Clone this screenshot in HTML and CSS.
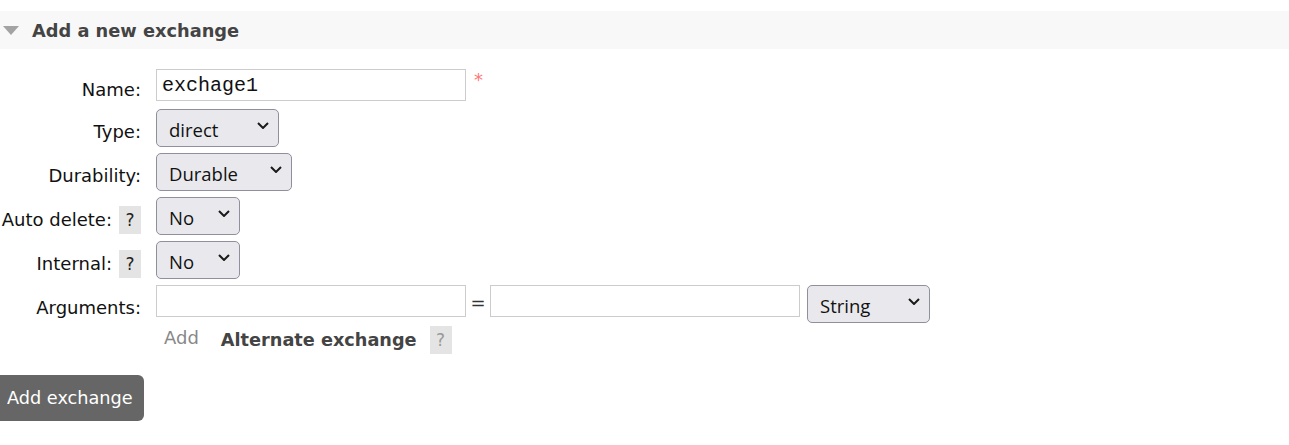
FILE: index.html
```html
<!DOCTYPE html>
<html lang="en">
<head>
<meta charset="utf-8">
<title>Add a new exchange</title>
<link rel="stylesheet" href="styles.css">
</head>
<body>
<div class="section-header">
  <svg class="tri" width="16" height="9" viewBox="0 0 16 9"><polygon points="0,0 16,0 8,9" fill="#a3a3a3"/></svg>
  <h2 class="title">Add a new exchange</h2>
</div>
<form class="form">
  <div class="row row-name">
    <label class="label label-name">Name:</label>
    <div class="control">
      <input class="text" type="text" value="exchage1">
      <span class="mand">*</span>
    </div>
  </div>
  <div class="row">
    <label class="label">Type:</label>
    <div class="control">
      <span class="sel sel-type"><select><option>direct</option><option>fanout</option><option>headers</option><option>topic</option></select><svg class="chev" width="12" height="7" viewBox="0 0 12 7"><polyline points="1,1 6,6 11,1" fill="none" stroke="#1a1a1a" stroke-width="2"/></svg></span>
    </div>
  </div>
  <div class="row">
    <label class="label">Durability:</label>
    <div class="control">
      <span class="sel sel-dur"><select><option>Durable</option><option>Transient</option></select><svg class="chev" width="12" height="7" viewBox="0 0 12 7"><polyline points="1,1 6,6 11,1" fill="none" stroke="#1a1a1a" stroke-width="2"/></svg></span>
    </div>
  </div>
  <div class="row">
    <div class="label"><span class="label-text">Auto delete:</span><span class="help">?</span></div>
    <div class="control">
      <span class="sel sel-no"><select><option>No</option><option>Yes</option></select><svg class="chev" width="12" height="7" viewBox="0 0 12 7"><polyline points="1,1 6,6 11,1" fill="none" stroke="#1a1a1a" stroke-width="2"/></svg></span>
    </div>
  </div>
  <div class="row">
    <div class="label"><span class="label-text">Internal:</span><span class="help">?</span></div>
    <div class="control">
      <span class="sel sel-no"><select><option>No</option><option>Yes</option></select><svg class="chev" width="12" height="7" viewBox="0 0 12 7"><polyline points="1,1 6,6 11,1" fill="none" stroke="#1a1a1a" stroke-width="2"/></svg></span>
    </div>
  </div>
  <div class="row row-args">
    <label class="label">Arguments:</label>
    <div class="control">
      <input class="text" type="text">
      <span class="eq">=</span>
      <input class="text" type="text">
      <span class="sel sel-type sel-string"><select><option>String</option><option>Number</option><option>Boolean</option><option>List</option></select><svg class="chev" width="12" height="7" viewBox="0 0 12 7"><polyline points="1,1 6,6 11,1" fill="none" stroke="#1a1a1a" stroke-width="2"/></svg></span>
    </div>
  </div>
  <div class="row row-add">
    <div class="label"></div>
    <div class="control add-line">
      <span class="add-link">Add</span>
      <span class="alt">Alternate exchange</span>
      <span class="help help-dim">?</span>
    </div>
  </div>
  <button class="btn" type="button">Add exchange</button>
</form>
</body>
</html>
```
FILE: styles.css
```css
html, body {
  margin: 0;
  padding: 0;
  background: #ffffff;
}
body {
  font-family: "DejaVu Sans", Verdana, sans-serif;
  font-size: 18px;
  color: #111;
}
.section-header {
  margin-top: 11px;
  height: 38px;
  background: #f8f8f8;
  display: flex;
  align-items: center;
}
.tri {
  margin-left: 3px;
  margin-top: 1px;
  display: block;
}
.title {
  margin: 0 0 0 13px;
  font-size: 17.8px;
  font-weight: bold;
  color: #444;
  line-height: 21px;
}
.form {
  margin-top: 20px;
  display: flex;
  flex-direction: column;
  align-items: flex-start;
}
.row {
  display: flex;
  align-items: flex-start;
  height: 44px;
}
.row-name { height: 40px; }
.row-args { height: 41px; }
.row-add { height: 28px; }
.label {
  width: 141px;
  flex-shrink: 0;
  display: flex;
  justify-content: flex-end;
  align-items: flex-start;
  text-align: right;
  line-height: 21px;
  padding-top: 12px;
  box-sizing: border-box;
  white-space: nowrap;
}
.label-name { padding-top: 10px; }
.label .help {
  margin-left: 7px;
  margin-top: -3px;
}
.help {
  display: inline-block;
  width: 22px;
  height: 28px;
  line-height: 28px;
  text-align: center;
  background: #e4e4e4;
  font-size: 17px;
  color: #222;
}
.help-dim { color: #999; }
.row-add .label { padding-top: 0; }
.control {
  margin-left: 15px;
  display: flex;
  align-items: flex-start;
}
.text {
  width: 310px;
  height: 32px;
  box-sizing: border-box;
  border: 1px solid #cccccc;
  padding: 0 5px;
  margin: 0;
  font-family: "Liberation Mono", "Courier New", monospace;
  font-size: 20px;
  color: #111;
  background: #fff;
  outline: none;
}
.mand {
  margin-left: 8px;
  margin-top: 2px;
  color: #f77;
  font-size: 18px;
  line-height: 18px;
}
.eq {
  width: 24px;
  text-align: center;
  line-height: 32px;
  margin-top: 2px;
  color: #333;
}
.sel {
  position: relative;
  display: inline-block;
}
.sel select {
  appearance: none;
  -webkit-appearance: none;
  display: block;
  height: 38px;
  box-sizing: border-box;
  border: 1px solid #8f8f9d;
  border-radius: 5px;
  background: #e9e9ed;
  padding: 3px 30px 0 12px;
  margin: 0;
  font-family: "Open Sans", "Noto Sans", sans-serif;
  font-size: 18.5px;
  color: #111;
  outline: none;
}
.sel-type select { width: 123px; }
.sel-dur select { width: 136px; }
.sel-no select { width: 84px; }
.sel-string { margin-left: 7px; }
.chev {
  position: absolute;
  right: 10px;
  top: 13px;
  pointer-events: none;
}
.add-line { height: 28px; }
.add-link {
  margin-left: 8px;
  margin-top: 1px;
  color: #888;
  line-height: 21px;
}
.alt {
  margin-left: 22px;
  margin-top: 4px;
  font-weight: bold;
  font-size: 17.7px;
  color: #444;
  line-height: 21px;
}
.add-line .help { margin-left: 13px; }
.btn {
  margin-top: 21px;
  margin-left: -5px;
  height: 46px;
  padding: 0 11px 0 12px;
  border: none;
  border-radius: 6px;
  background: #666666;
  color: #ffffff;
  font-family: "DejaVu Sans", Verdana, sans-serif;
  font-size: 17.7px;
  cursor: pointer;
}
```
